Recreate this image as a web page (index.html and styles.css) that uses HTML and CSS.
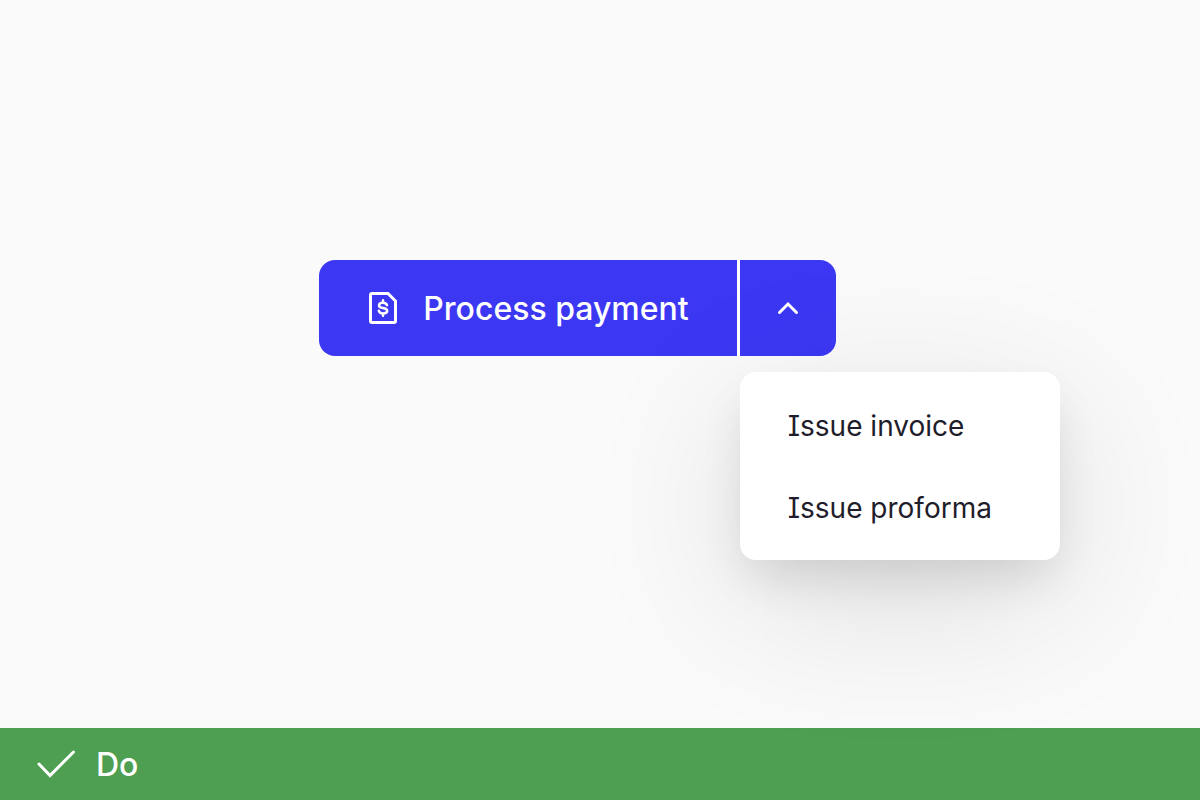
FILE: index.html
```
<!DOCTYPE html>
<html lang="en">

<head>
    <meta charset="UTF-8">
    <meta name="viewport" content="width=device-width, initial-scale=1">
    <title>Split button</title>
    <link rel="stylesheet" href="styles.css">
</head>

<body>

    <main class="stage">
        <div class="split-button">
            <button type="button" class="btn btn-main">
                <svg class="icon" viewBox="0 0 32 32" width="32" height="32" aria-hidden="true">
                    <path d="M5 1.500H21L28.500 9V29a1.500 1.500 0 0 1-1.500 1.500H5A1.500 1.500 0 0 1 3.500 29V3A1.500 1.500 0 0 1 5 1.500Z" />
                    <path class="thin" d="M16 8.200V10.500M16 21.500V23.800M20 13.300C19.600 11.500 18.200 10.700 16 10.700C13.500 10.700 12 11.800 12 13.400C12 15.100 13.700 15.600 16 16C18.400 16.400 20.200 16.900 20.200 18.700C20.200 20.400 18.500 21.400 16 21.400C13.600 21.400 12.200 20.500 11.800 18.700" />
                </svg>
                Process payment
            </button>
            <div class="dropdown">
                <button type="button" class="btn btn-toggle" aria-label="More actions" aria-haspopup="menu" aria-expanded="true">
                    <svg class="icon" viewBox="0 0 32 32" width="32" height="32" aria-hidden="true">
                        <path d="M7.500 20.500L16 12L24.500 20.500" />
                    </svg>
                </button>
                <div class="menu" role="menu">
                    <button type="button" class="menu-item" role="menuitem">Issue invoice</button>
                    <button type="button" class="menu-item" role="menuitem">Issue proforma</button>
                </div>
            </div>
        </div>
    </main>

    <footer class="verdict">
        <svg class="icon" viewBox="0 0 40 40" width="40" height="40" aria-hidden="true">
            <path d="M3 20L14 31.500L37.500 8" />
        </svg>
        Do
    </footer>

</body>

</html>
```

FILE: styles.css
```
* {
    box-sizing: border-box;
}

body {
    margin: 0;
    min-height: 100vh;
    display: flex;
    flex-direction: column;
    background-color: #fafafa;
    font-family: Inter, "Liberation Sans", sans-serif;
}

button {
    border: 0;
    font-family: inherit;
    cursor: pointer;
}

/* icons are drawn with lines only */
.icon {
    flex: none;
    fill: none;
    stroke: currentColor;
    stroke-width: 3;
    stroke-linecap: round;
}

.icon .thin {
    stroke-width: 2.5;
}

.stage {
    flex: 1;
    display: flex;
    justify-content: center;
    align-items: flex-start;
    padding: 260px 45px 0 0;
}

/* split button */
.split-button {
    display: flex;
}

.btn {
    display: flex;
    align-items: center;
    justify-content: center;
    height: 96px;
    background-color: #3c37f3;
    color: #fff;
    font-size: 32px;
    font-weight: 500;
    white-space: nowrap;
}

.btn-main {
    gap: 24px;
    padding: 0 48px;
    border-radius: 16px 0 0 16px;
}

.btn-toggle {
    width: 96px;
    padding: 0;
    border-radius: 0 16px 16px 0;
}

/* menu that opens under the arrow */
.dropdown {
    position: relative;
    margin-left: 3px;
}

/* white line between the two halves */
.dropdown::before {
    content: "";
    position: absolute;
    top: 0;
    bottom: 0;
    right: 100%;
    width: 3px;
    background-color: #fff;
    z-index: 1;
}

.menu {
    position: absolute;
    top: 100%;
    left: 0;
    width: 320px;
    margin-top: 16px;
    padding: 12px 0;
    border-radius: 16px;
    background-color: #fff;
    box-shadow: 0 24px 48px -8px rgba(0, 0, 0, 0.12), 0 40px 160px rgba(0, 0, 0, 0.12);
}

.menu-item {
    display: block;
    width: 100%;
    padding: 25px 48px 23px;
    background: none;
    color: #1f1d2b;
    font-size: 28px;
    line-height: 34px;
    text-align: left;
    font-feature-settings: "cv08";
}

/* bottom bar */
.verdict {
    display: flex;
    align-items: center;
    gap: 20px;
    height: 72px;
    padding: 0 36px;
    background-color: #4f9f52;
    color: #fff;
    font-size: 32px;
    font-weight: 500;
}
```
